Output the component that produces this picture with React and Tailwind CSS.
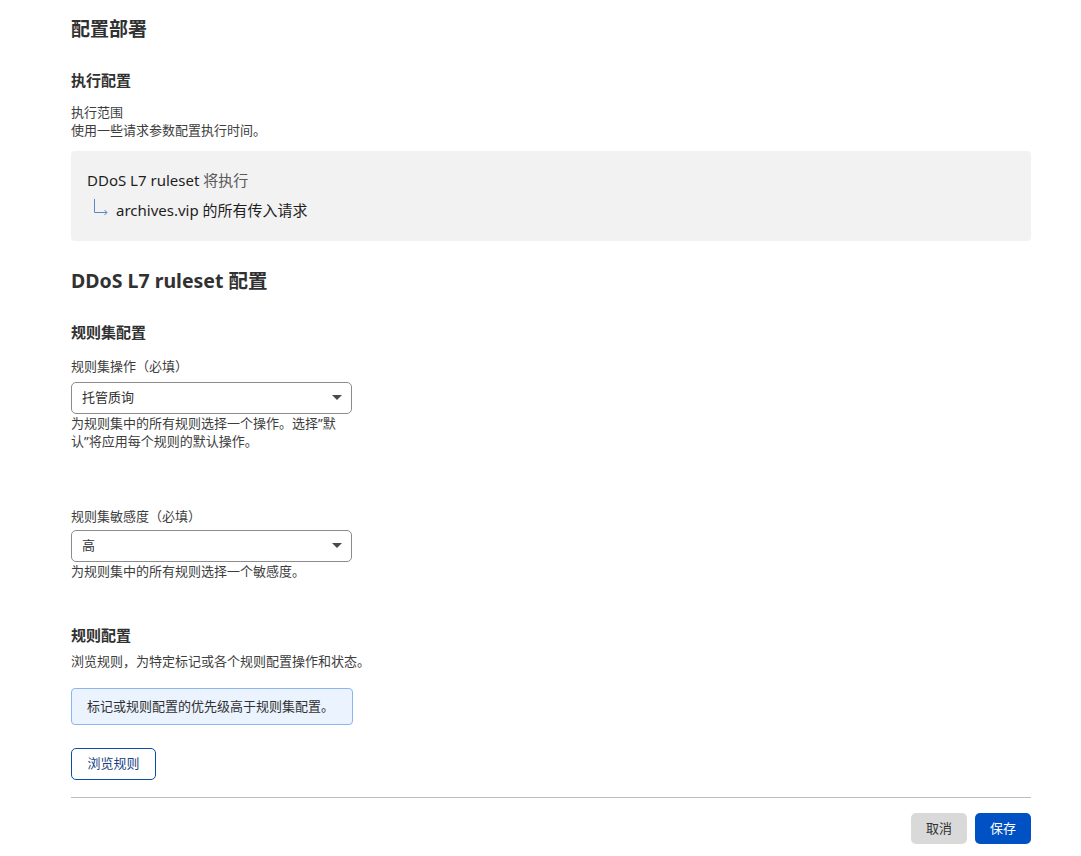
const font = { fontFamily: '"Noto Sans", "Noto Sans CJK SC", sans-serif' };

const Caret = () => (
  <svg width="10" height="6" viewBox="0 0 10 6" className="shrink-0">
    <path d="M0 0 H10 L5 5 Z" fill="#4a4a4a" />
  </svg>
);

const SelectBox = ({ value }) => (
  <div className="w-[281px] h-[32px] border border-[#8c8c8c] rounded-[5px] bg-white flex items-center justify-between pl-[10px] pr-[9px] text-[13px] text-[#313131]">
    <span>{value}</span>
    <Caret />
  </div>
);

export default function App() {
  return (
    <div className="min-h-[856px] bg-white text-[#313131]" style={font}>
      <div className="pl-[71px] w-[1031px] pt-[15px]">
        <h1 className="text-[19px] font-bold leading-[28px]">配置部署</h1>

        <h2 className="text-[15px] font-bold leading-[20px] mt-[27px]">执行配置</h2>
        <div className="mt-[13px] text-[13px] leading-[18px] text-[#3d3d3d]">
          <p>执行范围</p>
          <p>使用一些请求参数配置执行时间。</p>
        </div>

        <div className="mt-[12px] bg-[#f2f2f2] rounded-[4px] h-[90px] px-[16px] pt-[19px]">
          <p className="text-[15px] leading-[20px] text-[#1e1e1e]">
            DDoS L7 ruleset <span className="text-[#595959]">将执行</span>
          </p>
          <div className="flex items-center mt-[10px] pl-[5px]">
            <svg width="18" height="18" viewBox="0 0 18 18" className="shrink-0 -mt-[6px]">
              <path d="M2.5 1 V14.5 H15 M12.5 12 L15 14.5 L12.5 17" stroke="#5b86c8" strokeWidth="1" fill="none" />
            </svg>
            <span className="ml-[6px] text-[15px] leading-[20px] text-[#1e1e1e]">archives.vip 的所有传入请求</span>
          </div>
        </div>

        <h1 className="text-[19.5px] font-bold leading-[28px] mt-[26px]">DDoS L7 ruleset 配置</h1>

        <h2 className="text-[15px] font-bold leading-[20px] mt-[27px]">规则集配置</h2>

        <p className="mt-[15px] text-[13px] leading-[18px] text-[#3d3d3d]">规则集操作（必填）</p>
        <div className="mt-[7px]">
          <SelectBox value="托管质询" />
        </div>
        <p className="w-[281px] text-[13px] leading-[18px] text-[#3d3d3d]">
          为规则集中的所有规则选择一个操作。选择”默认”将应用每个规则的默认操作。
        </p>

        <p className="mt-[57px] text-[13px] leading-[18px] text-[#3d3d3d]">规则集敏感度（必填）</p>
        <div className="mt-[5px]">
          <SelectBox value="高" />
        </div>
        <p className="w-[281px] text-[13px] leading-[18px] text-[#3d3d3d]">为规则集中的所有规则选择一个敏感度。</p>

        <h2 className="text-[15px] font-bold leading-[20px] mt-[45px]">规则配置</h2>
        <p className="mt-[7px] text-[13px] leading-[18px] text-[#3d3d3d]">浏览规则，为特定标记或各个规则配置操作和状态。</p>

        <div className="mt-[18px] w-[282px] h-[37px] bg-[#ebf3fe] border border-[#8cb6f2] rounded-[4px] flex items-center px-[15px] text-[13px] text-[#313131]">
          标记或规则配置的优先级高于规则集配置。
        </div>

        <button className="mt-[23px] w-[85px] h-[32px] border border-[#0a4ea8] rounded-[5px] bg-white text-[13px] text-[#1c3f85]">
          浏览规则
        </button>

        <div className="mt-[17px] border-t border-[#bdbdbd]" />

        <div className="flex justify-end gap-[8px] mt-[15px]">
          <button className="w-[56px] h-[31px] rounded-[5px] bg-[#d9d9d9] text-[13px] text-[#313131]">取消</button>
          <button className="w-[56px] h-[31px] rounded-[5px] bg-[#0051c3] text-[13px] text-white">保存</button>
        </div>
      </div>
    </div>
  );
}
